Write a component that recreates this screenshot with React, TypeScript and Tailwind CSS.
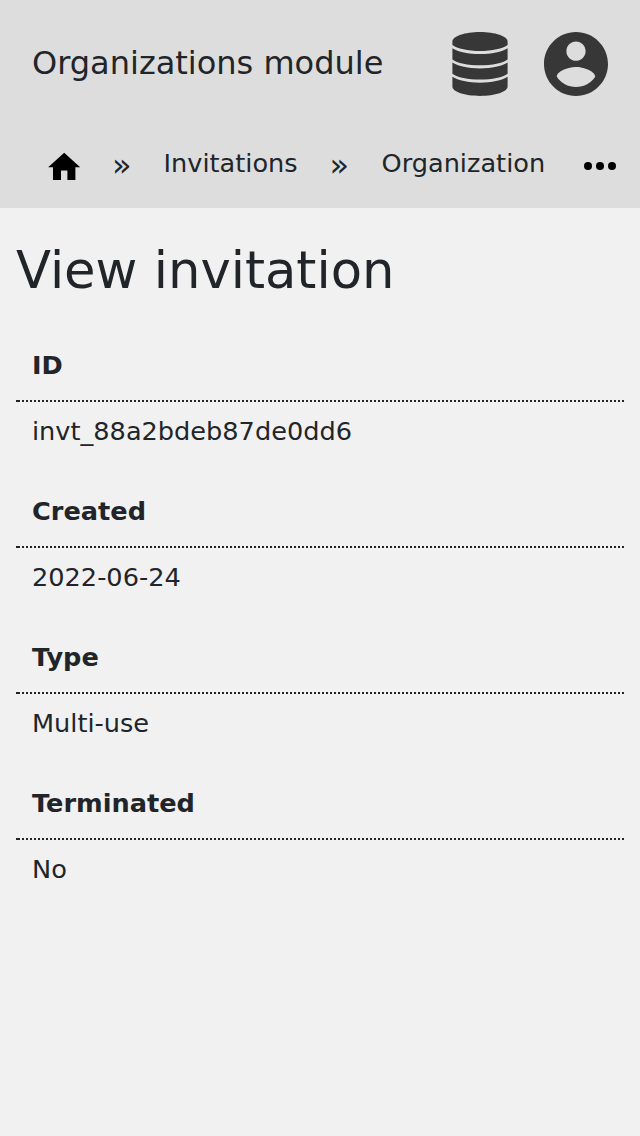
const rows = [
  { label: 'ID', value: 'invt_88a2bdeb87de0dd6' },
  { label: 'Created', value: '2022-06-24' },
  { label: 'Type', value: 'Multi-use' },
  { label: 'Terminated', value: 'No' },
];

function DatabaseIcon() {
  return (
    <svg viewBox="0 0 56 64" className="h-16 w-14 fill-[#373737]">
      <path d="M.4 9.5C.4 4.2 12.8 0 28 0s27.6 4.2 27.6 9.5v3.5C51 16.6 40 19 28 19S5 16.6.4 13z" />
      <path d="M.4 16.2C6 19.8 16.5 22.1 28 22.1S50 19.8 55.6 16.2v11.2C51 30.9 40 33.3 28 33.3S5 30.9.4 27.4z" />
      <path d="M.4 30.5C6 34.1 16.5 36.4 28 36.4S50 34.1 55.6 30.5v11.2C51 45.2 40 47.6 28 47.6S5 45.2.4 41.7z" />
      <path d="M.4 44.8C6 48.4 16.5 50.7 28 50.7S50 48.4 55.6 44.8v9.8C55.6 59.8 43.2 64 28 64S.4 59.8.4 54.6z" />
    </svg>
  );
}

function AccountIcon() {
  return (
    <svg viewBox="2 2 20 20" className="size-16 fill-[#373737]">
      <path d="M12 2C6.48 2 2 6.48 2 12s4.48 10 10 10 10-4.48 10-10S17.52 2 12 2zm0 3c1.66 0 3 1.34 3 3s-1.34 3-3 3-3-1.34-3-3 1.34-3 3-3zm0 14.2c-2.5 0-4.71-1.28-6-3.22.03-1.99 4-3.08 6-3.08 1.99 0 5.97 1.09 6 3.08-1.29 1.94-3.5 3.22-6 3.22z" />
    </svg>
  );
}

export default function App() {
  return (
    <div className="min-h-[1136px] bg-[#f1f1f1] font-['DejaVu_Sans',sans-serif] text-[#212529]">
      <header className="h-52 bg-[#dddddd]">
        <div className="flex h-32 items-center px-8">
          <span className="flex-1 pb-0.5 text-[32px] leading-[48px] whitespace-nowrap">Organizations module</span>
          <DatabaseIcon />
          <div className="w-9" />
          <AccountIcon />
        </div>
        <nav className="flex h-20 text-[25.6px] leading-[38px] whitespace-nowrap">
          <div className="w-28 pt-5 pl-[44.8px]">
            <svg viewBox="0 0 24 24" className="size-[38.4px] fill-black">
              <path d="M10 20v-6h4v6h5v-8h3L12 3 2 12h3v8z" />
            </svg>
          </div>
          <span className="w-[51.5px] pt-[18px] text-[32px] leading-[38px]">»</span>
          <span className="w-[166px] pt-4">Invitations</span>
          <span className="w-[52px] pt-[18px] text-[32px] leading-[38px]">»</span>
          <span className="w-[202.5px] pt-4">Organization</span>
          <svg viewBox="0 0 32 8" className="mt-[34px] h-2 w-8">
            <circle cx="4" cy="4" r="4" />
            <circle cx="16" cy="4" r="4" />
            <circle cx="28" cy="4" r="4" />
          </svg>
        </nav>
      </header>
      <main className="px-4 pt-8">
        <h1 className="text-[51.2px] leading-[61px]">View invitation</h1>
        <dl className="mt-7 text-[25.6px] leading-[38px]">
          {rows.map((row) => (
            <div key={row.label} className="h-[146px]">
              <dt className="h-[71px] px-4 pt-[17px] font-bold">{row.label}</dt>
              <div className="h-0.5 border-l-2 border-[#212529] bg-[repeating-linear-gradient(90deg,#212529_0_2px,transparent_2px_4px)]" />
              <dd className="px-4 pt-2.5">{row.value}</dd>
            </div>
          ))}
        </dl>
      </main>
    </div>
  );
}
